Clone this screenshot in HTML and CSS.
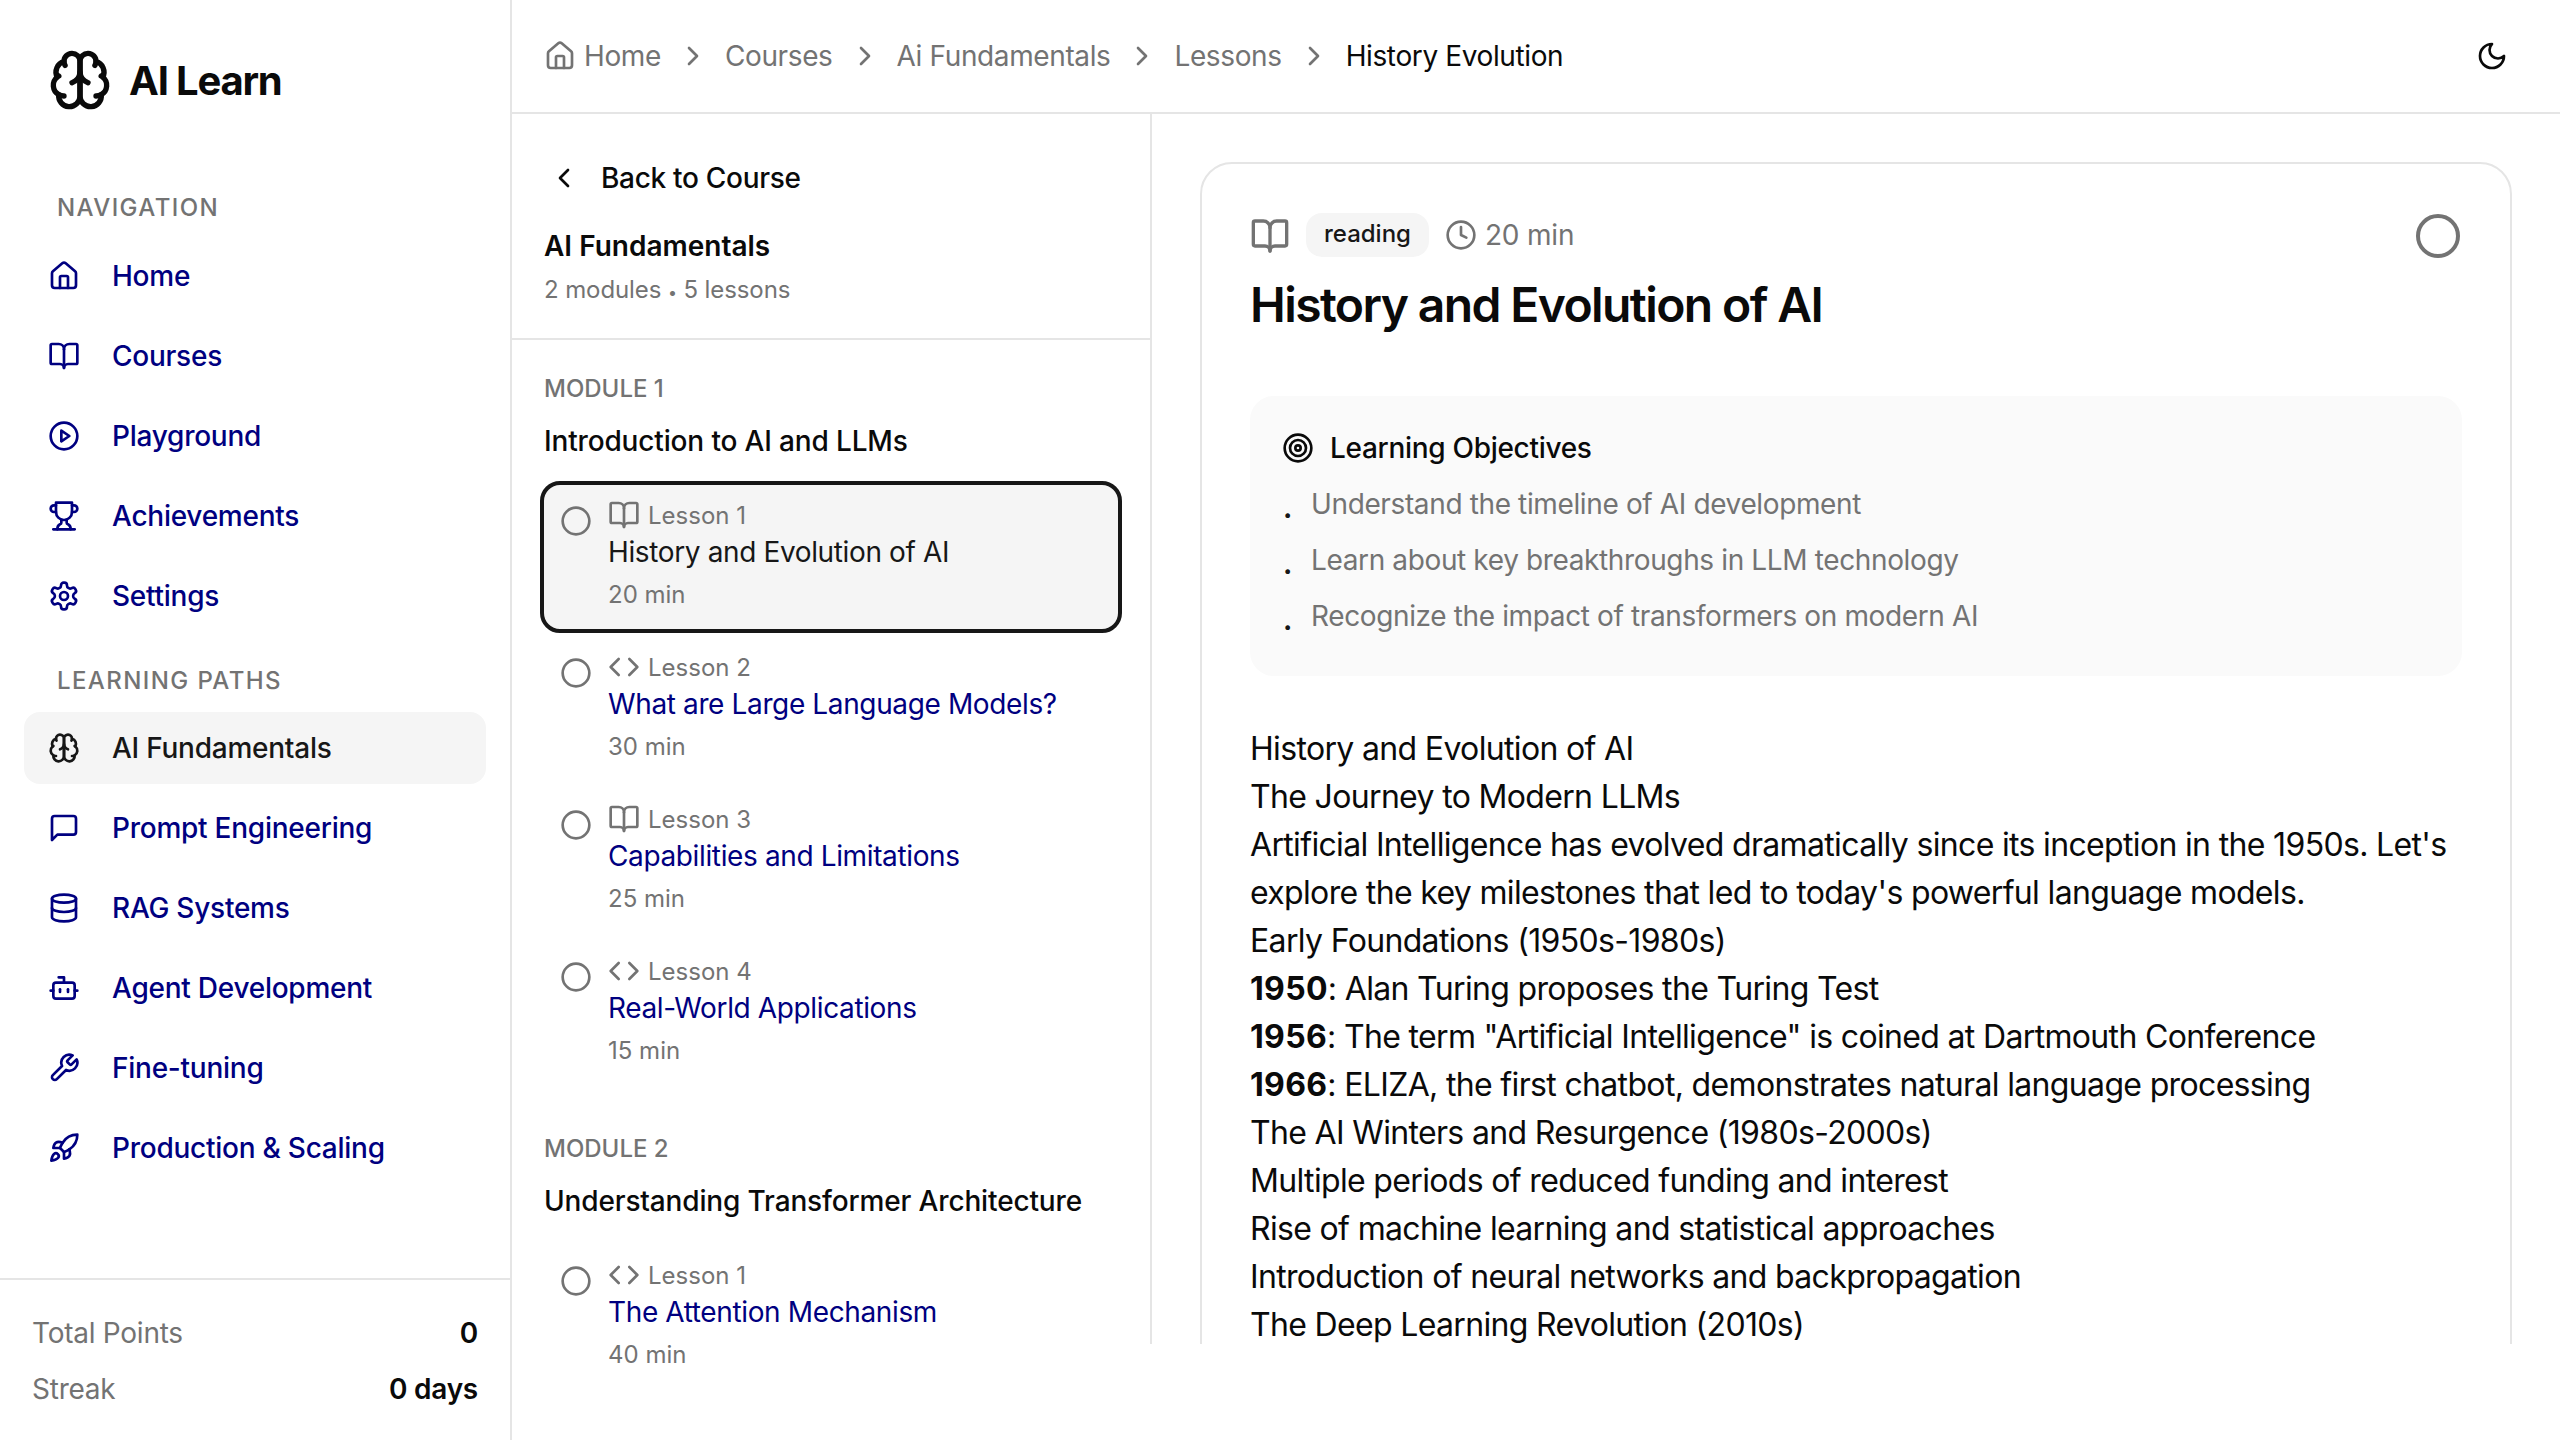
FILE: index.html
```html
<!DOCTYPE html>
<html lang="en">
<head>
<meta charset="UTF-8">
<title>AI Learn</title>
<link rel="stylesheet" href="styles.css">
</head>
<body>

<svg class="sprite" xmlns="http://www.w3.org/2000/svg">
  <symbol id="i-brain" viewBox="0 0 24 24"><path d="M12 5a3 3 0 1 0-5.997.125 4 4 0 0 0-2.526 5.77 4 4 0 0 0 .556 6.588A4 4 0 1 0 12 18Z"/><path d="M12 5a3 3 0 1 1 5.997.125 4 4 0 0 1 2.526 5.77 4 4 0 0 1-.556 6.588A4 4 0 1 1 12 18Z"/><path d="M15 13a4.5 4.5 0 0 1-3-4 4.5 4.5 0 0 1-3 4"/><path d="M17.599 6.5a3 3 0 0 0 .399-1.375"/><path d="M6.003 5.125A3 3 0 0 0 6.401 6.5"/><path d="M3.477 10.896a4 4 0 0 1 .585-.396"/><path d="M19.938 10.5a4 4 0 0 1 .585.396"/><path d="M6 18a4 4 0 0 1-1.967-.516"/><path d="M19.967 17.484A4 4 0 0 1 18 18"/></symbol>
  <symbol id="i-home" viewBox="0 0 24 24"><path d="M15 21v-8a1 1 0 0 0-1-1h-4a1 1 0 0 0-1 1v8"/><path d="M3 10a2 2 0 0 1 .709-1.528l7-5.999a2 2 0 0 1 2.582 0l7 5.999A2 2 0 0 1 21 10v9a2 2 0 0 1-2 2H5a2 2 0 0 1-2-2z"/></symbol>
  <symbol id="i-book" viewBox="0 0 24 24"><path d="M12 7v14"/><path d="M3 18a1 1 0 0 1-1-1V4a1 1 0 0 1 1-1h5a4 4 0 0 1 4 4 4 4 0 0 1 4-4h5a1 1 0 0 1 1 1v13a1 1 0 0 1-1 1h-6a3 3 0 0 0-3 3 3 3 0 0 0-3-3z"/></symbol>
  <symbol id="i-play" viewBox="0 0 24 24"><circle cx="12" cy="12" r="10"/><polygon points="10 8 16 12 10 16 10 8"/></symbol>
  <symbol id="i-trophy" viewBox="0 0 24 24"><path d="M6 9H4.5a2.5 2.5 0 0 1 0-5H6"/><path d="M18 9h1.5a2.5 2.5 0 0 0 0-5H18"/><path d="M4 22h16"/><path d="M10 14.66V17c0 .55-.47.98-.97 1.21C7.85 18.75 7 20.24 7 22"/><path d="M14 14.66V17c0 .55.47.98.97 1.21C16.15 18.75 17 20.24 17 22"/><path d="M18 2H6v7a6 6 0 0 0 12 0V2Z"/></symbol>
  <symbol id="i-settings" viewBox="0 0 24 24"><path d="M12.22 2h-.44a2 2 0 0 0-2 2v.18a2 2 0 0 1-1 1.73l-.43.25a2 2 0 0 1-2 0l-.15-.08a2 2 0 0 0-2.73.73l-.22.38a2 2 0 0 0 .73 2.73l.15.1a2 2 0 0 1 1 1.72v.51a2 2 0 0 1-1 1.74l-.15.09a2 2 0 0 0-.73 2.73l.22.38a2 2 0 0 0 2.73.73l.15-.08a2 2 0 0 1 2 0l.43.25a2 2 0 0 1 1 1.73V20a2 2 0 0 0 2 2h.44a2 2 0 0 0 2-2v-.18a2 2 0 0 1 1-1.73l.43-.25a2 2 0 0 1 2 0l.15.08a2 2 0 0 0 2.73-.73l.22-.39a2 2 0 0 0-.73-2.73l-.15-.08a2 2 0 0 1-1-1.74v-.5a2 2 0 0 1 1-1.74l.15-.09a2 2 0 0 0 .73-2.73l-.22-.38a2 2 0 0 0-2.73-.73l-.15.08a2 2 0 0 1-2 0l-.43-.25a2 2 0 0 1-1-1.73V4a2 2 0 0 0-2-2z"/><circle cx="12" cy="12" r="3"/></symbol>
  <symbol id="i-message" viewBox="0 0 24 24"><path d="M21 15a2 2 0 0 1-2 2H7l-4 4V5a2 2 0 0 1 2-2h14a2 2 0 0 1 2 2z"/></symbol>
  <symbol id="i-database" viewBox="0 0 24 24"><ellipse cx="12" cy="5" rx="9" ry="3"/><path d="M3 5V19A9 3 0 0 0 21 19V5"/><path d="M3 12A9 3 0 0 0 21 12"/></symbol>
  <symbol id="i-bot" viewBox="0 0 24 24"><path d="M12 8V4H8"/><rect width="16" height="12" x="4" y="8" rx="2"/><path d="M2 14h2"/><path d="M20 14h2"/><path d="M15 13v2"/><path d="M9 13v2"/></symbol>
  <symbol id="i-wrench" viewBox="0 0 24 24"><path d="M14.7 6.3a1 1 0 0 0 0 1.4l1.6 1.6a1 1 0 0 0 1.4 0l3.77-3.77a6 6 0 0 1-7.94 7.94l-6.91 6.91a2.12 2.12 0 0 1-3-3l6.91-6.91a6 6 0 0 1 7.94-7.94l-3.76 3.76z"/></symbol>
  <symbol id="i-rocket" viewBox="0 0 24 24"><path d="M4.5 16.5c-1.5 1.26-2 5-2 5s3.74-.5 5-2c.71-.84.7-2.13-.09-2.91a2.18 2.18 0 0 0-2.91-.09z"/><path d="m12 15-3-3a22 22 0 0 1 2-3.95A12.88 12.88 0 0 1 22 2c0 2.72-.78 7.5-6 11a22.35 22.35 0 0 1-4 2z"/><path d="M9 12H4s.55-3.03 2-4c1.62-1.08 5 0 5 0"/><path d="M12 15v5s3.03-.55 4-2c1.08-1.62 0-5 0-5"/></symbol>
  <symbol id="i-right" viewBox="0 0 24 24"><path d="m9 18 6-6-6-6"/></symbol>
  <symbol id="i-left" viewBox="0 0 24 24"><path d="m15 18-6-6 6-6"/></symbol>
  <symbol id="i-code" viewBox="0 0 24 24"><path d="m16 18 6-6-6-6"/><path d="m8 6-6 6 6 6"/></symbol>
  <symbol id="i-clock" viewBox="0 0 24 24"><circle cx="12" cy="12" r="10"/><polyline points="12 6 12 12 16 14"/></symbol>
  <symbol id="i-target" viewBox="0 0 24 24"><circle cx="12" cy="12" r="10"/><circle cx="12" cy="12" r="6"/><circle cx="12" cy="12" r="2"/></symbol>
  <symbol id="i-moon" viewBox="0 0 24 24"><path d="M12 3a6 6 0 0 0 9 9 9 9 0 1 1-9-9Z"/></symbol>
  <symbol id="i-circle" viewBox="0 0 24 24"><circle cx="12" cy="12" r="10"/></symbol>
</svg>

<div class="app">

  <aside class="sidebar">
    <div class="brand">
      <svg class="icon icon-logo"><use href="#i-brain"/></svg>
      <span>AI Learn</span>
    </div>

    <h3 class="nav-heading">NAVIGATION</h3>
    <nav class="nav">
      <a class="nav-item"><svg class="icon"><use href="#i-home"/></svg>Home</a>
      <a class="nav-item"><svg class="icon"><use href="#i-book"/></svg>Courses</a>
      <a class="nav-item"><svg class="icon"><use href="#i-play"/></svg>Playground</a>
      <a class="nav-item"><svg class="icon"><use href="#i-trophy"/></svg>Achievements</a>
      <a class="nav-item"><svg class="icon"><use href="#i-settings"/></svg>Settings</a>
    </nav>

    <h3 class="nav-heading nav-heading-paths">LEARNING PATHS</h3>
    <nav class="nav">
      <a class="nav-item active"><svg class="icon"><use href="#i-brain"/></svg>AI Fundamentals</a>
      <a class="nav-item"><svg class="icon"><use href="#i-message"/></svg>Prompt Engineering</a>
      <a class="nav-item"><svg class="icon"><use href="#i-database"/></svg>RAG Systems</a>
      <a class="nav-item"><svg class="icon"><use href="#i-bot"/></svg>Agent Development</a>
      <a class="nav-item"><svg class="icon"><use href="#i-wrench"/></svg>Fine-tuning</a>
      <a class="nav-item"><svg class="icon"><use href="#i-rocket"/></svg>Production &amp; Scaling</a>
    </nav>

    <div class="stats">
      <div class="stat"><span>Total Points</span><b>0</b></div>
      <div class="stat"><span>Streak</span><b>0 days</b></div>
    </div>
  </aside>

  <div class="page">
    <header class="topbar">
      <a class="crumb"><svg class="icon"><use href="#i-home"/></svg>Home</a>
      <svg class="icon crumb-sep"><use href="#i-right"/></svg>
      <a class="crumb">Courses</a>
      <svg class="icon crumb-sep"><use href="#i-right"/></svg>
      <a class="crumb">Ai Fundamentals</a>
      <svg class="icon crumb-sep"><use href="#i-right"/></svg>
      <a class="crumb">Lessons</a>
      <svg class="icon crumb-sep"><use href="#i-right"/></svg>
      <span class="crumb current">History Evolution</span>
      <svg class="icon theme-toggle"><use href="#i-moon"/></svg>
    </header>

    <div class="split">
      <section class="lessons">
        <div class="course-head">
          <a class="back"><svg class="icon"><use href="#i-left"/></svg>Back to Course</a>
          <h2 class="course-title">AI Fundamentals</h2>
          <p class="course-meta">2 modules <span class="meta-dot">•</span> 5 lessons</p>
        </div>

        <div class="module">
          <p class="module-label">MODULE 1</p>
          <h3 class="module-title">Introduction to AI and LLMs</h3>

          <a class="lesson current">
            <svg class="icon lesson-check"><use href="#i-circle"/></svg>
            <div>
              <div class="lesson-label"><svg class="icon"><use href="#i-book"/></svg>Lesson 1</div>
              <div class="lesson-name">History and Evolution of AI</div>
              <div class="lesson-time">20 min</div>
            </div>
          </a>
          <a class="lesson">
            <svg class="icon lesson-check"><use href="#i-circle"/></svg>
            <div>
              <div class="lesson-label"><svg class="icon"><use href="#i-code"/></svg>Lesson 2</div>
              <div class="lesson-name">What are Large Language Models?</div>
              <div class="lesson-time">30 min</div>
            </div>
          </a>
          <a class="lesson">
            <svg class="icon lesson-check"><use href="#i-circle"/></svg>
            <div>
              <div class="lesson-label"><svg class="icon"><use href="#i-book"/></svg>Lesson 3</div>
              <div class="lesson-name">Capabilities and Limitations</div>
              <div class="lesson-time">25 min</div>
            </div>
          </a>
          <a class="lesson">
            <svg class="icon lesson-check"><use href="#i-circle"/></svg>
            <div>
              <div class="lesson-label"><svg class="icon"><use href="#i-code"/></svg>Lesson 4</div>
              <div class="lesson-name">Real-World Applications</div>
              <div class="lesson-time">15 min</div>
            </div>
          </a>
        </div>

        <div class="module module-next">
          <p class="module-label">MODULE 2</p>
          <h3 class="module-title">Understanding Transformer Architecture</h3>

          <a class="lesson">
            <svg class="icon lesson-check"><use href="#i-circle"/></svg>
            <div>
              <div class="lesson-label"><svg class="icon"><use href="#i-code"/></svg>Lesson 1</div>
              <div class="lesson-name">The Attention Mechanism</div>
              <div class="lesson-time">40 min</div>
            </div>
          </a>
        </div>
      </section>

      <main class="content">
        <article class="card">
          <div class="card-meta">
            <svg class="icon icon-lg muted"><use href="#i-book"/></svg>
            <span class="chip">reading</span>
            <span class="duration"><svg class="icon"><use href="#i-clock"/></svg>20 min</span>
            <svg class="icon icon-xl complete-toggle"><use href="#i-circle"/></svg>
          </div>
          <h1 class="card-title">History and Evolution of AI</h1>

          <div class="objectives">
            <div class="objectives-head"><svg class="icon"><use href="#i-target"/></svg>Learning Objectives</div>
            <ul class="objectives-list">
              <li><span class="dot">.</span>Understand the timeline of AI development</li>
              <li><span class="dot">.</span>Learn about key breakthroughs in LLM technology</li>
              <li><span class="dot">.</span>Recognize the impact of transformers on modern AI</li>
            </ul>
          </div>

          <div class="prose">
            <p>History and Evolution of AI</p>
            <p>The Journey to Modern LLMs</p>
            <p>Artificial Intelligence has evolved dramatically since its inception in the 1950s. Let's explore the key milestones that led to today's powerful language models.</p>
            <p>Early Foundations (1950s-1980s)</p>
            <p><strong>1950</strong>: Alan Turing proposes the Turing Test</p>
            <p><strong>1956</strong>: The term "Artificial Intelligence" is coined at Dartmouth Conference</p>
            <p><strong>1966</strong>: ELIZA, the first chatbot, demonstrates natural language processing</p>
            <p>The AI Winters and Resurgence (1980s-2000s)</p>
            <p>Multiple periods of reduced funding and interest</p>
            <p>Rise of machine learning and statistical approaches</p>
            <p>Introduction of neural networks and backpropagation</p>
            <p>The Deep Learning Revolution (2010s)</p>
          </div>
        </article>
      </main>
    </div>
  </div>

</div>

</body>
</html>
```

FILE: styles.css
```css
* {
  box-sizing: border-box;
}

html, body {
  height: 100%;
}

body {
  margin: 0;
  overflow: hidden;
  background: #fff;
  color: #0a0a0a;
  font-family: Inter, "Liberation Sans", sans-serif;
  font-size: 28px;
}

h1, h2, h3, p, ul {
  margin: 0;
  padding: 0;
}

.sprite {
  display: none;
}

.icon {
  width: 32px;
  height: 32px;
  flex: none;
  fill: none;
  stroke: currentColor;
  stroke-width: 2;
  stroke-linecap: round;
  stroke-linejoin: round;
}

.icon-lg { width: 40px; height: 40px; }
.icon-xl { width: 48px; height: 48px; }
.icon-logo { width: 64px; height: 64px; }
.muted { color: #737373; }

/* left sidebar */
.app {
  display: flex;
  height: 1440px;
}

.sidebar {
  display: flex;
  flex-direction: column;
  width: 512px;
  flex: none;
  border-right: 2px solid #e5e5e5;
}

.brand {
  display: flex;
  align-items: center;
  gap: 17px;
  padding: 46px 0 0 48px;
  height: 114px;
  font-size: 40px;
  font-weight: 700;
  letter-spacing: -1.2px;
}

.nav-heading {
  margin: 79px 0 0 57px;
  height: 30px;
  line-height: 30px;
  font-size: 24px;
  font-weight: 500;
  letter-spacing: 1.4px;
  color: #737373;
}

.nav-heading-paths {
  margin-top: 34px;
}

.nav {
  display: flex;
  flex-direction: column;
  gap: 8px;
  margin: 17px 24px 0;
}

.nav-heading-paths + .nav {
  margin-top: 16px;
}

.nav-item {
  display: flex;
  align-items: center;
  gap: 32px;
  height: 72px;
  padding-left: 24px;
  border-radius: 16px;
  font-weight: 500;
  letter-spacing: -0.25px;
  color: #000080;
}

.nav-item.active {
  background: #f5f5f5;
  color: #171717;
}

.stats {
  margin-top: auto;
  padding: 32px 32px 0;
  height: 162px;
  border-top: 2px solid #e5e5e5;
}

.stat {
  display: flex;
  justify-content: space-between;
  height: 56px;
  line-height: 42px;
  letter-spacing: -0.25px;
  color: #737373;
}

.stat b {
  font-weight: 600;
  color: #0a0a0a;
}

/* top bar */
.page {
  flex: 1;
  min-width: 0;
}

.topbar {
  display: flex;
  align-items: center;
  gap: 16px;
  height: 114px;
  padding: 0 52px 0 32px;
  border-bottom: 2px solid #e5e5e5;
  color: #737373;
}

.crumb {
  display: flex;
  align-items: center;
  gap: 8px;
  letter-spacing: -0.38px;
}

.crumb.current {
  color: #0a0a0a;
}

.theme-toggle {
  margin-left: auto;
  color: #0a0a0a;
}

/* lesson list */
.split {
  display: flex;
  height: 1230px;
}

.lessons {
  width: 640px;
  flex: none;
  border-right: 2px solid #e5e5e5;
}

.course-head {
  height: 226px;
  padding: 48px 32px 0;
  border-bottom: 2px solid #e5e5e5;
}

.back {
  display: flex;
  align-items: center;
  gap: 21px;
  height: 32px;
  padding-left: 4px;
  font-weight: 500;
  letter-spacing: -0.3px;
}

.course-title {
  margin-top: 32px;
  line-height: 40px;
  font-size: 28px;
  font-weight: 600;
}

.course-meta {
  margin-top: 6px;
  line-height: 36px;
  font-size: 24px;
  letter-spacing: -0.1px;
  color: #737373;
}

.meta-dot {
  font-size: 16px;
}

.module {
  padding: 31px 28px 0;
}

.module-next {
  padding-top: 42px;
}

.module-label {
  padding-left: 4px;
  line-height: 36px;
  font-size: 24px;
  font-weight: 500;
  color: #737373;
}

.module-title {
  margin: 14px 0 20px;
  padding-left: 4px;
  line-height: 40px;
  font-size: 28px;
  font-weight: 500;
  letter-spacing: -0.15px;
}

.lesson {
  display: flex;
  gap: 16px;
  height: 152px;
  padding: 14px 16px;
  border: 4px solid transparent;
  border-radius: 20px;
}

.lesson.current {
  background: #f5f5f5;
  border-color: #171717;
}

.lesson-check {
  margin-top: 6px;
  color: #737373;
}

.lesson-label {
  display: flex;
  align-items: center;
  gap: 8px;
  height: 32px;
  font-size: 24px;
  color: #737373;
}

.lesson-name {
  margin-top: 1px;
  line-height: 40px;
  letter-spacing: -0.37px;
  color: #000080;
}

.current .lesson-name {
  color: #171717;
}

.lesson-time {
  margin-top: 5px;
  line-height: 36px;
  font-size: 24px;
  color: #737373;
}

/* lesson content */
.content {
  flex: 1;
  min-width: 0;
  padding: 48px;
  overflow: hidden;
}

.card {
  height: 1400px;
  padding: 48px;
  border: 2px solid #e5e5e5;
  border-radius: 32px;
}

.card-meta {
  display: flex;
  align-items: center;
  gap: 16px;
  height: 48px;
  color: #737373;
}

.chip {
  margin-top: -2px;
  padding: 0 18px;
  height: 44px;
  line-height: 42px;
  border-radius: 16px;
  background: #f5f5f5;
  font-size: 24px;
  font-weight: 500;
  color: #171717;
}

.duration {
  display: flex;
  align-items: center;
  gap: 8px;
  margin-top: -2px;
  letter-spacing: -0.2px;
}

.complete-toggle {
  margin-left: auto;
}

.card-title {
  margin-top: 15px;
  line-height: 60px;
  font-size: 48px;
  font-weight: 600;
  letter-spacing: -1.6px;
}

.objectives {
  height: 280px;
  margin-top: 61px;
  padding: 32px;
  border-radius: 24px;
  background: #fafafa;
}

.objectives-head {
  display: flex;
  align-items: center;
  gap: 16px;
  height: 40px;
  font-weight: 500;
  letter-spacing: -0.3px;
}

.objectives-list {
  margin-top: 16px;
  list-style: none;
}

.objectives-list li {
  display: flex;
  height: 56px;
  line-height: 40px;
  letter-spacing: -0.37px;
  color: #737373;
}

.dot {
  width: 28px;
  margin: 4px 0 0 1px;
  font-weight: 700;
  color: #171717;
}

.prose {
  margin-top: 49px;
  line-height: 48px;
  font-size: 32px;
  letter-spacing: -0.66px;
}

.prose strong {
  font-weight: 700;
  letter-spacing: 0.3px;
}
```
